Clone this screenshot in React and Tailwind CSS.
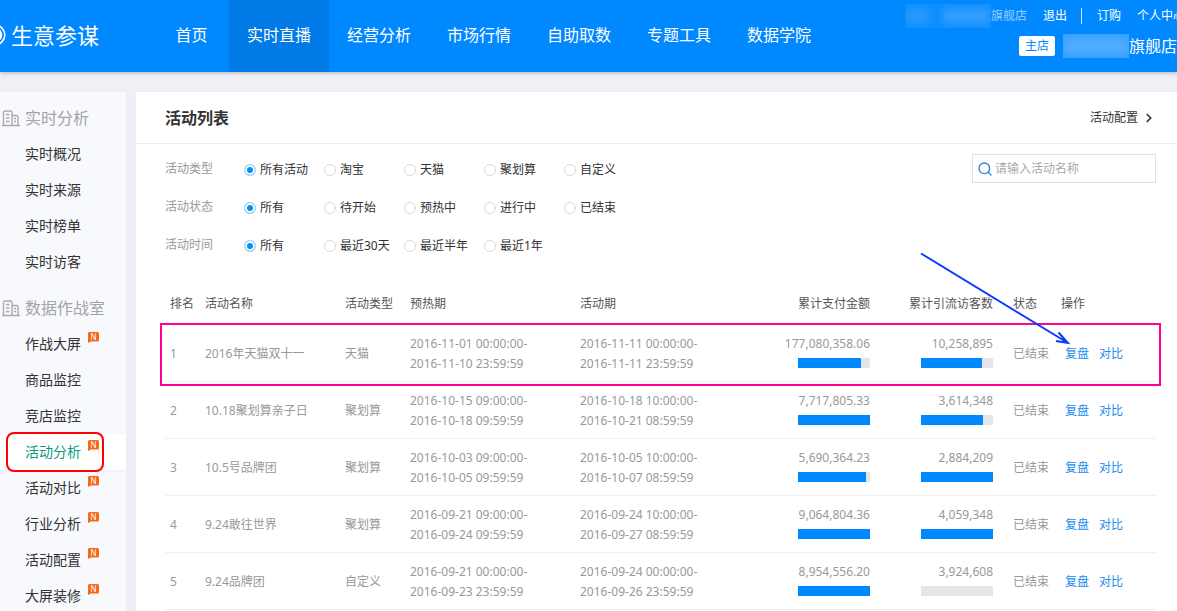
import clsx from 'clsx'
import { ChevronRight, Search } from 'lucide-react'

const navItems = ['首页', '实时直播', '经营分析', '市场行情', '自助取数', '专题工具', '数据学院']

const menu = [
  {
    title: '实时分析',
    items: [{ name: '实时概况' }, { name: '实时来源' }, { name: '实时榜单' }, { name: '实时访客' }],
  },
  {
    title: '数据作战室',
    items: [
      { name: '作战大屏', isNew: true },
      { name: '商品监控' },
      { name: '竞店监控' },
      { name: '活动分析', isNew: true, active: true },
      { name: '活动对比', isNew: true },
      { name: '行业分析', isNew: true },
      { name: '活动配置', isNew: true },
      { name: '大屏装修', isNew: true },
    ],
  },
]

const filters = [
  { key: 'type', label: '活动类型', options: ['所有活动', '淘宝', '天猫', '聚划算', '自定义'] },
  { key: 'status', label: '活动状态', options: ['所有', '待开始', '预热中', '进行中', '已结束'] },
  { key: 'time', label: '活动时间', options: ['所有', '最近30天', '最近半年', '最近1年'] },
]

const rows = [
  {
    name: '2016年天猫双十一',
    type: '天猫',
    warmup: ['2016-11-01 00:00:00-', '2016-11-10 23:59:59'],
    period: ['2016-11-11 00:00:00-', '2016-11-11 23:59:59'],
    amount: '177,080,358.06',
    amountPct: 88,
    visitors: '10,258,895',
    visitorsPct: 85,
  },
  {
    name: '10.18聚划算亲子日',
    type: '聚划算',
    warmup: ['2016-10-15 09:00:00-', '2016-10-18 09:59:59'],
    period: ['2016-10-18 10:00:00-', '2016-10-21 08:59:59'],
    amount: '7,717,805.33',
    amountPct: 100,
    visitors: '3,614,348',
    visitorsPct: 86,
  },
  {
    name: '10.5号品牌团',
    type: '聚划算',
    warmup: ['2016-10-03 09:00:00-', '2016-10-05 09:59:59'],
    period: ['2016-10-05 10:00:00-', '2016-10-07 08:59:59'],
    amount: '5,690,364.23',
    amountPct: 95,
    visitors: '2,884,209',
    visitorsPct: 100,
  },
  {
    name: '9.24敢往世界',
    type: '聚划算',
    warmup: ['2016-09-21 09:00:00-', '2016-09-24 09:59:59'],
    period: ['2016-09-24 10:00:00-', '2016-09-27 08:59:59'],
    amount: '9,064,804.36',
    amountPct: 100,
    visitors: '4,059,348',
    visitorsPct: 100,
  },
  {
    name: '9.24品牌团',
    type: '自定义',
    warmup: ['2016-09-21 00:00:00-', '2016-09-23 23:59:59'],
    period: ['2016-09-24 00:00:00-', '2016-09-26 23:59:59'],
    amount: '8,954,556.20',
    amountPct: 100,
    visitors: '3,924,608',
    visitorsPct: 0,
  },
]

function BuildingIcon() {
  return (
    <svg width="18" height="17" viewBox="0 0 18 17" fill="none" stroke="#a9a9ae" strokeWidth="1.4">
      <path d="M0 15.500h18M1.500 15.500V2.500q0-1.500 1.500-1.500h5.500q1.500 0 1.500 1.500v13M10 5.500h4.500q1.500 0 1.500 1.500v8.500" />
      <path d="M4 4.500h3.500M4 8h3.500M4 11.500h3.500M12 8.500h2M12 11.500h2" />
    </svg>
  )
}

function NewBadge() {
  return (
    <svg width="11" height="11" viewBox="0 0 11 11" className="overflow-visible">
      <path d="M1.500 0h8q1.500 0 1.500 1.500v6.500q0 1.500-1.500 1.500H3L0 11V1.500Q0 0 1.500 0z" fill="#f56a16" />
      <text x="5.500" y="7.500" textAnchor="middle" fontSize="8" fill="#fff">N</text>
    </svg>
  )
}

function Header() {
  return (
    <header className="relative z-10 flex h-18 overflow-hidden bg-[#0088ff] text-white shadow-[0_1px_4px_rgba(0,0,0,0.25)]">
      <a href="#" className="flex shrink-0 items-center gap-[5px] pb-0.5 text-[22px] leading-8">
        <svg width="6" height="26" viewBox="0 0 6 26" fill="none" stroke="#fff">
          <circle cx="-5" cy="13" r="9.800" strokeWidth="1.600" />
          <circle cx="-5" cy="13" r="6" strokeWidth="2.500" />
        </svg>
        <span>生意参谋</span>
      </a>
      <nav className="ml-[55px] flex shrink-0 text-base">
        {navItems.map((item, i) => (
          <a
            key={item}
            href="#"
            className={clsx(
              'flex items-center justify-center pb-0.5',
              i === 0 ? 'w-[75px]' : 'w-[100px]',
              i === 1 && 'bg-[#007ae6]'
            )}
          >
            {item}
          </a>
        ))}
      </nav>
      <div className="-mr-2 ml-auto flex shrink-0 flex-col items-end text-xs">
        <div className="flex h-8 items-center">
          <span className="flex h-6 w-[86px] items-center justify-between overflow-hidden bg-white/5">
            <span className="h-4 w-6 bg-white/10 blur-xs" />
            <span className="h-4 w-12 bg-white/15 blur-xs" />
          </span>
          <span className="text-white/60">旗舰店</span>
          <a href="#" className="ml-4">退出</a>
          <span className="mr-[15px] ml-3.5 h-4 w-px bg-white/80" />
          <a href="#">订购</a>
          <a href="#" className="ml-4">个人中心</a>
        </div>
        <div className="flex h-7 items-center pr-2">
          <span className="mr-2 rounded-xs bg-white px-1.5 leading-5 text-[#0088ff]">主店</span>
          <span className="flex h-6 w-[66px] items-center overflow-hidden bg-white/20">
            <span className="h-4 w-full bg-white/15 blur-xs" />
          </span>
          <span className="text-base">旗舰店</span>
        </div>
      </div>
    </header>
  )
}

function Sidebar() {
  return (
    <aside className="flex w-[126px] shrink-0 flex-col gap-2.5 bg-[#f8f9fd] pt-2">
      {menu.map((group) => (
        <div key={group.title}>
          <h2 className="flex h-9 items-center gap-[5px] pl-0.5 text-base text-[#a3a3a8]">
            <BuildingIcon />
            {group.title}
          </h2>
          <ul className="text-sm text-[#333]">
            {group.items.map((item) => (
              <li key={item.name} className={clsx('relative', item.active && 'bg-white shadow-xs')}>
                <a
                  href="#"
                  className={clsx('flex h-9 items-center gap-[7px] pl-[25px]', item.active && 'text-[#0a9a7c]')}
                >
                  {item.name}
                  {item.isNew && (
                    <span className="pb-3.5">
                      <NewBadge />
                    </span>
                  )}
                </a>
                {item.active && (
                  <span className="pointer-events-none absolute -top-0.5 -bottom-0.5 left-1.5 w-[98px] rounded-lg border-2 border-[#ff0000]" />
                )}
              </li>
            ))}
          </ul>
        </div>
      ))}
    </aside>
  )
}

function Filters() {
  return (
    <div>
      {filters.map((filter) => (
        <div key={filter.key} role="radiogroup" aria-label={filter.label} className="flex h-[38px] items-center">
          <span className="w-[79px] pb-0.5 text-[#999]">{filter.label}</span>
          {filter.options.map((option, i) => (
            <label key={option} className="flex w-20 items-center gap-1 whitespace-nowrap">
              <input
                type="radio"
                name={filter.key}
                defaultChecked={i === 0}
                className="size-3 shrink-0 appearance-none rounded-full border border-[#d5dae8] bg-white checked:border-[#a9d6f8] checked:bg-[#0091f2] checked:shadow-[inset_0_0_0_2px_#fff]"
              />
              {option}
            </label>
          ))}
        </div>
      ))}
    </div>
  )
}

function BarCell({ value, pct }) {
  return (
    <td className="px-[5px]">
      <div className="flex flex-col items-end">
        <span>{value}</span>
        <div className="mt-1 mb-1.5 h-2.5 w-18 bg-[#e5e5e8]">
          <div className="h-full bg-[#0088ff]" style={{ width: `${pct}%` }} />
        </div>
      </div>
    </td>
  )
}

function ActivityTable() {
  return (
    <div className="relative mt-[15px]">
      <table className="w-full table-fixed border-separate border-spacing-0 text-left leading-5 text-[#999]">
        <thead className="text-[#555]">
          <tr className="h-[45px] [&>th]:pt-0.5">
            <th className="w-[35px] pl-[5px] font-normal">排名</th>
            <th className="w-[140px] px-[5px] font-normal">活动名称</th>
            <th className="w-[65px] px-[5px] font-normal">活动类型</th>
            <th className="w-[170px] px-[5px] font-normal">预热期</th>
            <th className="px-[5px] font-normal">活动期</th>
            <th className="w-[135px] px-[5px] text-right font-normal">累计支付金额</th>
            <th className="w-[123px] px-[5px] text-right font-normal">累计引流访客数</th>
            <th className="w-[58px] pl-[15px] font-normal">状态</th>
            <th className="w-[100px] pl-[5px] font-normal">操作</th>
          </tr>
        </thead>
        <tbody>
          {rows.map((row, i) => (
            <tr key={row.name} className="h-[57px] [&>td]:border-b [&>td]:border-[#f0f0f2] [&>td]:pt-0.5">
              <td className="pl-[5px]">{i + 1}</td>
              <td className="px-[5px]">{row.name}</td>
              <td className="px-[5px]">{row.type}</td>
              {[row.warmup, row.period].map(([start, end]) => (
                <td key={start} className="px-[5px]">
                  {start}
                  <br />
                  {end}
                </td>
              ))}
              <BarCell value={row.amount} pct={row.amountPct} />
              <BarCell value={row.visitors} pct={row.visitorsPct} />
              <td className="pl-[15px] whitespace-nowrap">已结束</td>
              <td className="pl-[9px] text-[#1b8cf0]">
                <a href="#" className="mr-2.5">复盘</a>
                <a href="#">对比</a>
              </td>
            </tr>
          ))}
        </tbody>
      </table>

      {/* Callout: frame round the first row and arrow to its action */}
      <div className="pointer-events-none absolute top-[43px] -right-[5px] -left-[5px] h-[63px] border-2 border-[#ff0090]" />
      <svg
        className="pointer-events-none absolute -top-7 right-[86px]"
        width="150"
        height="94"
        viewBox="0 0 150 94"
        fill="none"
        stroke="#0a3cff"
        strokeWidth="2"
      >
        <path d="M1 1.500L148 91M138.500 80.500L148 91L136 89" />
      </svg>
    </div>
  )
}

export default function App() {
  return (
    <div className="flex min-h-screen flex-col bg-[#eff0f5] font-['Noto_Sans','Noto_Sans_CJK_SC',sans-serif] text-xs text-[#333]">
      <Header />
      <div className="flex flex-1 gap-2.5 pt-5">
        <Sidebar />
        <main className="min-w-0 flex-1 bg-white shadow-xs">
          <div className="flex h-[52px] items-center justify-between border-b border-[#ececf0] pr-[21px] pl-[29px]">
            <h1 className="text-base font-bold">活动列表</h1>
            <a href="#" className="flex items-center gap-1">
              活动配置
              <ChevronRight size={14} strokeWidth={3} />
            </a>
          </div>
          <div className="pt-[7px] pr-[21px] pl-[29px]">
            <div className="flex items-start justify-between">
              <Filters />
              <label className="mt-[3px] flex h-[29px] w-[184px] items-center gap-0.5 border border-[#d9e3ec] pl-1">
                <Search size={16} strokeWidth={2} className="shrink-0 text-[#2a86dc]" />
                <input
                  type="text"
                  aria-label="请输入活动名称"
                  placeholder="请输入活动名称"
                  className="w-full min-w-0 outline-none placeholder:text-[#aaa]"
                />
              </label>
            </div>
            <ActivityTable />
          </div>
        </main>
      </div>
    </div>
  )
}
